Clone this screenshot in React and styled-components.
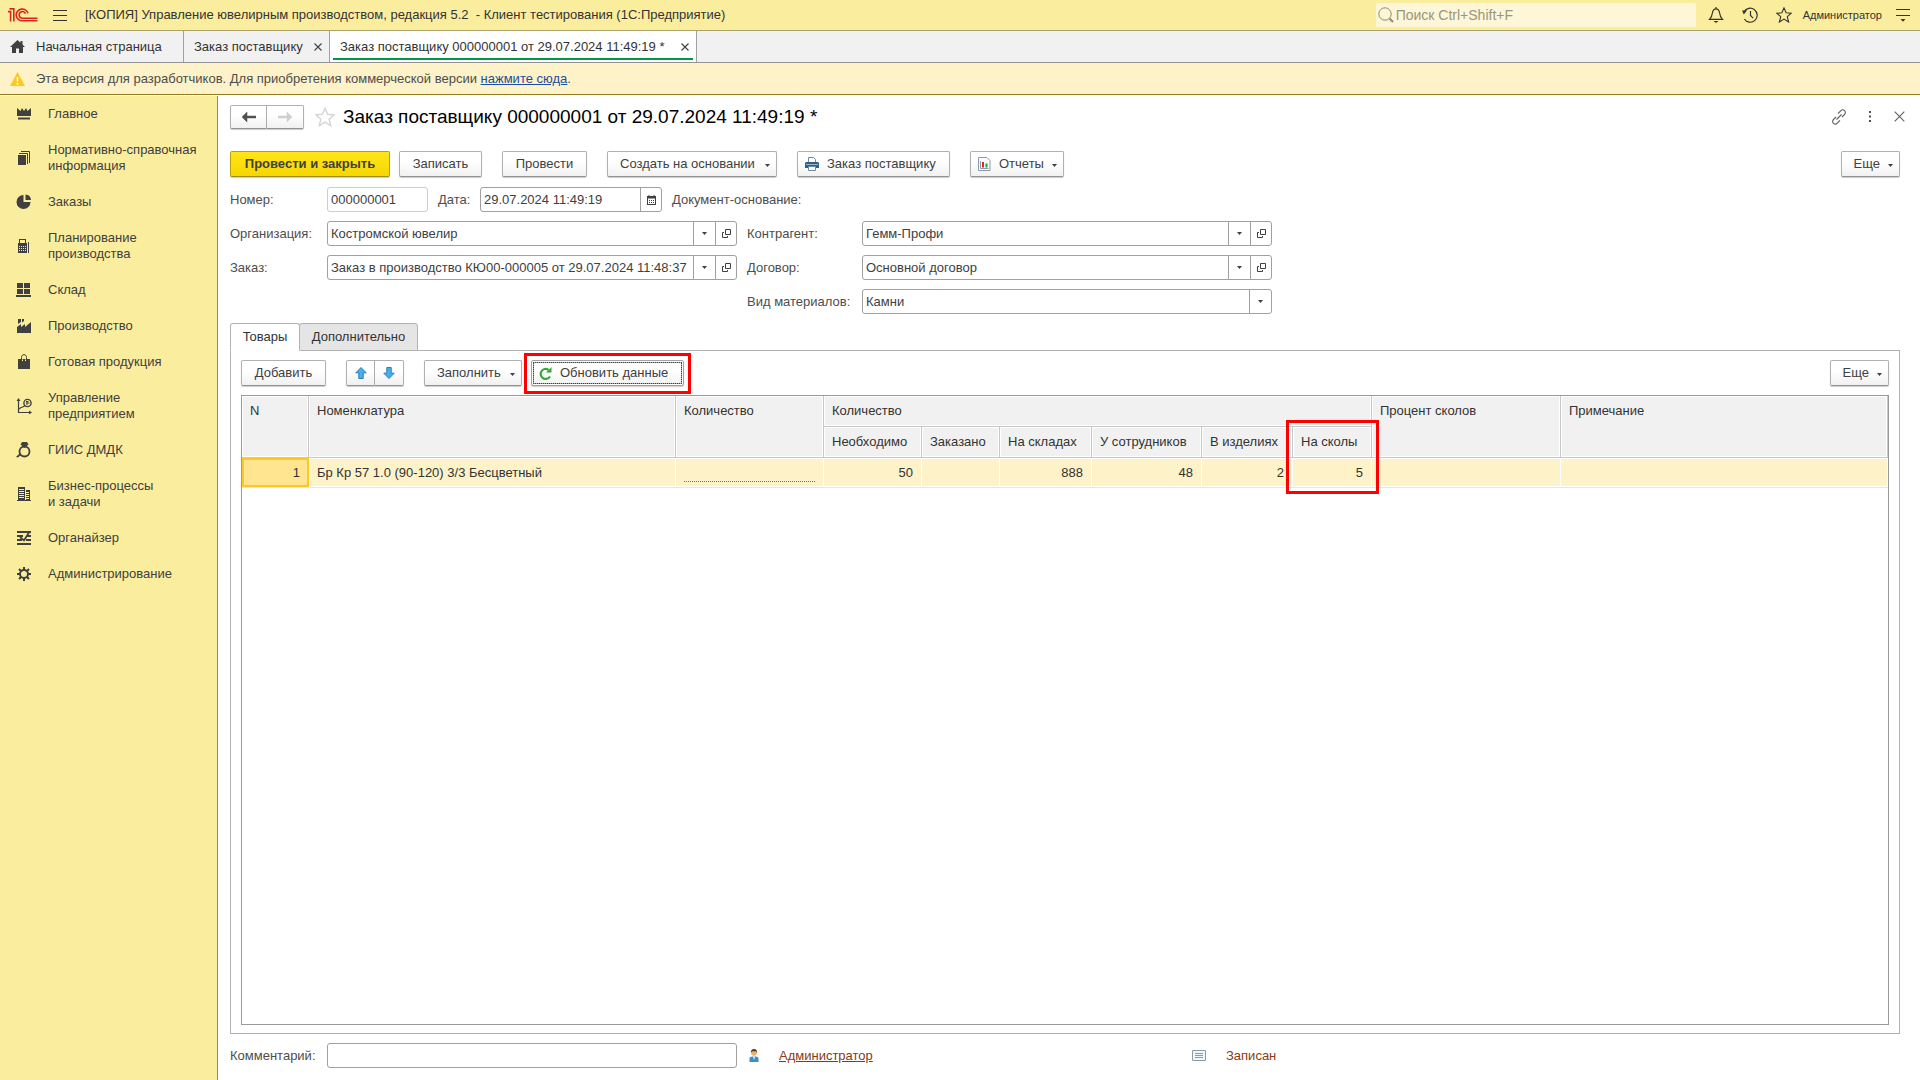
import React, { useState } from "react";
import styled, { createGlobalStyle, css } from "styled-components";

const GlobalStyle = createGlobalStyle`
  * {
    box-sizing: border-box;
  }

  body {
    margin: 0;
    background: #fff;
  }

  body, button, input, select {
    font-family: Arial, "Liberation Sans", sans-serif;
    font-size: 13px;
    line-height: 16px;
    color: #404040;
  }
`;

const Page = styled.div`
  display: flex;
  flex-direction: column;
  min-height: 100vh;
`;

/* ---------- top bar ---------- */

const TopBar = styled.header`
  display: flex;
  align-items: center;
  height: 31px;
  padding: 0 10px 0 8px;
  background: #fbed9e;
  border-bottom: 1px solid #aaa36c;
`;

const AppTitle = styled.span`
  flex: 1;
  margin-left: 18px;
  white-space: pre;
  color: #333;
`;

const IconButton = styled.button`
  display: flex;
  align-items: center;
  justify-content: center;
  padding: 0;
  border: 0;
  background: none;
  cursor: pointer;
`;

const MenuButton = styled(IconButton)`
  margin-left: 15px;
`;

const Search = styled.label`
  display: flex;
  align-items: center;
  width: 320px;
  height: 24px;
  padding-left: 2px;
  margin-right: 12px;
  border-radius: 2px;
  background: #fdf7d8;
`;

const SearchInput = styled.input`
  flex: 1;
  min-width: 0;
  padding: 0 2px;
  border: 0;
  outline: none;
  background: none;
  font-size: 14px;

  &::placeholder {
    color: #9b957c;
    opacity: 1;
  }
`;

const TopActions = styled.div`
  display: flex;
  align-items: center;
  gap: 18px;
`;

const UserName = styled.button`
  padding: 0;
  margin: 0 -4px 0 -7px;
  border: 0;
  background: none;
  font-size: 11px;
  color: #333;
`;

/* ---------- window tabs ---------- */

const WindowTabs = styled.nav`
  display: flex;
  height: 32px;
  background: #f1f1f1;
  border-bottom: 1px solid #949494;
`;

const WindowTab = styled.div`
  position: relative;
  display: flex;
  align-items: center;
  justify-content: space-between;
  gap: 9px;
  min-width: ${(props) => props.$width}px;
  padding: 0 7px 0 10px;
  border-right: 1px solid #a0a0a0;
  background: ${(props) => (props.$active ? "#fff" : "none")};

  ${(props) =>
    props.$active &&
    css`
      &::after {
        content: "";
        position: absolute;
        left: 3px;
        right: 3px;
        bottom: 2px;
        height: 2px;
        background: #009646;
      }
    `}
`;

const TabLabel = styled.button`
  display: flex;
  align-items: center;
  gap: 11px;
  padding: 0;
  border: 0;
  background: none;
  color: #333;
  white-space: nowrap;
`;

const Notice = styled.div`
  display: flex;
  align-items: center;
  gap: 11px;
  height: 32px;
  padding-left: 10px;
  background: #fdf2c8;
  border-bottom: 1px solid #937c1c;
  color: #4d4d4d;

  a {
    color: #1a4ea0;
  }
`;

/* ---------- sidebar ---------- */

const Body = styled.div`
  display: flex;
  flex: 1;
  padding-top: 1px;
`;

const Sidebar = styled.nav`
  width: 218px;
  flex-shrink: 0;
  background: #fbed9e;
  border-right: 1px solid #948c55;
`;

const SideLink = styled.a`
  display: flex;
  align-items: center;
  gap: 16px;
  padding: 10px 8px 10px 16px;
  color: #404040;
  text-decoration: none;
  white-space: pre-line;
`;

/* ---------- document form ---------- */

const Form = styled.main`
  display: flex;
  flex-direction: column;
  flex: 1;
  min-width: 0;
  padding: 8px 20px 12px 12px;
`;

const TitleRow = styled.div`
  display: flex;
  align-items: center;
  height: 25px;
`;

const Title = styled.h1`
  flex: 1;
  margin: 0 0 0 8px;
  font-size: 19px;
  line-height: 24px;
  font-weight: normal;
  color: #000;
`;

const TitleStar = styled(IconButton)`
  margin-left: 11px;
`;

const TitleActions = styled.div`
  display: flex;
  align-items: center;
  gap: 22px;
  margin-right: -5px;
`;

const Button = styled.button`
  display: flex;
  align-items: center;
  justify-content: ${(props) => (props.$icon || props.$menu ? "flex-start" : "center")};
  gap: 8px;
  min-width: ${(props) => (props.$width ? `${props.$width}px` : "auto")};
  height: 26px;
  padding: ${(props) => (props.$icon ? "0 6px 0 7px" : props.$menu ? "0 6px 0 12px" : "0 8px")};
  border: 1px solid #b0b0b0;
  border-bottom-color: #919191;
  border-radius: 2px;
  background: linear-gradient(#fff 40%, #f1f1f1);
  box-shadow: 0 1px 1px rgba(0, 0, 0, 0.2);
  white-space: nowrap;
  cursor: pointer;

  ${(props) =>
    props.$primary &&
    css`
      border-color: #b5a012;
      border-bottom-color: #a08c08;
      background: linear-gradient(#ffe619, #f7d600);
      font-weight: bold;
    `}

  ${(props) =>
    props.$focused &&
    css`
      border-color: #a0a0a0;
      box-shadow: 0 1px 1px rgba(0, 0, 0, 0.2), inset 0 0 0 1px #fff, inset 0 0 0 2px #a8a8a8;
      outline: 1px dotted #404040;
      outline-offset: -3px;
    `}
`;

const CaretSlot = styled.span`
  display: flex;
  margin: 3px 0 0 auto;
`;

const ButtonPair = styled.div`
  display: flex;

  ${Button} {
    width: ${(props) => props.$size}px;
    height: ${(props) => (props.$low ? 24 : 26)}px;
    padding: 0;
  }

  ${Button}:first-child {
    border-radius: 2px 0 0 2px;
  }

  ${Button}:last-child {
    border-left: 0;
    border-radius: 0 2px 2px 0;
  }
`;

const CommandBar = styled.div`
  display: flex;
  gap: 20px;
  margin-top: 22px;
`;

const CommandGroup = styled.div`
  display: flex;
  gap: 9px;
`;

const Spacer = styled.div`
  flex: 1;
`;

const Fields = styled.div`
  display: flex;
  flex-direction: column;
  gap: 9px;
  margin-top: 10px;
`;

const FieldRow = styled.div`
  display: flex;
  align-items: center;
  gap: 10px;
`;

const Half = styled.div`
  display: flex;
  align-items: center;
  width: ${(props) => props.$width}px;
`;

const Label = styled.label`
  width: ${(props) => (props.$width ? `${props.$width}px` : "auto")};
  flex-shrink: 0;
  white-space: nowrap;
  color: #4d4d4d;
`;

const Box = styled.div`
  position: relative;
  display: flex;
  flex: ${(props) => (props.$width ? "none" : 1)};
  width: ${(props) => (props.$width ? `${props.$width}px` : "auto")};
  min-width: 0;
  height: 25px;
  border: 1px solid ${(props) => (props.$readOnly ? "#cdcdcd" : "#a0a0a0")};
  border-radius: 3px;
  background: #fff;
`;

const control = css`
  flex: 1;
  min-width: 0;
  width: 100%;
  border: 0;
  outline: none;
  background: none;
`;

const TextInput = styled.input`
  ${control}
  padding: 0 3px;
`;

const Select = styled.select`
  ${control}
  appearance: none;
  padding: 0 24px 0 3px;
`;

const BoxButton = styled(IconButton)`
  width: 21px;
  flex-shrink: 0;
  border-left: 1px solid #a0a0a0;
`;

const SelectWrap = styled.div`
  position: relative;
  display: flex;
  flex: 1;
  min-width: 0;
`;

const SelectArrow = styled.span`
  position: absolute;
  top: 0;
  right: 0;
  bottom: 0;
  display: flex;
  align-items: center;
  justify-content: center;
  width: 22px;
  border-left: 1px solid #a0a0a0;
  pointer-events: none;
`;

/* ---------- tabs and table ---------- */

const PageTabs = styled.div`
  display: flex;
  margin-top: 9px;
`;

const PageTab = styled.button`
  height: 28px;
  min-width: ${(props) => props.$width}px;
  padding: 0 8px;
  margin-bottom: -1px;
  border: 1px solid #b3b3b3;
  border-radius: 3px 3px 0 0;
  color: #333;

  ${(props) =>
    props.$active
      ? css`
          z-index: 1;
          border-bottom-color: #fff;
          background: #fff;
        `
      : css`
          margin-left: -1px;
          background: #e5e5e5;
        `}
`;

const TabPanel = styled.section`
  display: flex;
  flex-direction: column;
  flex: 1;
  padding: 9px 10px 8px;
  border: 1px solid #b3b3b3;
`;

const TableBar = styled.div`
  display: flex;
  gap: 20px;
`;

const Marked = styled.div`
  position: relative;
`;

const Mark = styled.div`
  position: absolute;
  z-index: 2;
  inset: -7px -7px -8px;
  border: 3px solid #f00;
  pointer-events: none;
`;

const ColumnMark = styled(Mark)`
  inset: -7px -8px auto -7px;
  height: 74px;
`;

const TableBox = styled.div`
  flex: 1;
  margin-top: 9px;
  border: 1px solid #9a9a9a;
`;

const Table = styled.table`
  width: 100%;
  table-layout: fixed;
  border-collapse: separate;
  border-spacing: 0;
`;

const Th = styled.th`
  position: relative;
  height: 31px;
  padding: 7px 8px;
  border-right: 1px solid #c8c8c8;
  border-bottom: 1px solid #c8c8c8;
  background: #f1f1f1;
  box-shadow: inset 0 0 0 1px #fff;
  color: #333;
  font-weight: normal;
  text-align: left;
  vertical-align: top;
  white-space: nowrap;
`;

const Td = styled.td`
  height: 29px;
  padding: 0 8px;
  border: solid #fff;
  border-width: 1px 1px 1px 0;
  box-shadow: 0 1px 0 #e6e6e6;
  background: #fdf2c8;
  color: #333;
  text-align: ${(props) => props.$align || "left"};

  ${(props) =>
    props.$current &&
    css`
      padding: 0 7px;
      border: 2px solid #fcc821;
      background: #ffe58f;
    `}
`;

const Required = styled.div`
  height: 18px;
  border-bottom: 1px dotted #e03c28;
`;

/* ---------- footer ---------- */

const Footer = styled.footer`
  display: flex;
  align-items: center;
  margin-top: 9px;
`;

const FooterItem = styled.div`
  display: flex;
  align-items: center;
  gap: 20px;
  width: ${(props) => props.$width || 200}px;
  margin-left: 12px;
  color: #8b3a12;

  a {
    color: #8b3a12;
  }
`;

/* ---------- icons ---------- */

const CaretIcon = () => (
  <svg width="5" height="3" viewBox="0 0 5 3">
    <path d="M0 0h5L2.5 3z" fill="#404040" />
  </svg>
);

const Caret = () => (
  <CaretSlot>
    <CaretIcon />
  </CaretSlot>
);

const CloseIcon = ({ size = 8, color = "#404040" }) => (
  <svg width={size} height={size} viewBox="0 0 8 8">
    <path d="M.5.5l7 7M7.5.5l-7 7" stroke={color} strokeWidth={size > 8 ? 0.8 : 1.1} />
  </svg>
);

const OpenIcon = () => (
  <svg width="9" height="9" viewBox="0 0 9 9" fill="none" stroke="#404040">
    <path d="M3.5.5h5v5h-5z M2 3.5H.5v5h5V7" />
  </svg>
);

const CalendarIcon = () => (
  <svg width="9" height="10" viewBox="0 0 9 10">
    <path d="M0 1h9v9H0z M1.5 0h1v1h-1z M6.5 0h1v1h-1z" fill="#404040" />
    <path d="M1 3.5h7V9H1z" fill="#fff" />
    <path d="M2 5.5h5M2 7.5h5" stroke="#404040" strokeDasharray="1 1" />
  </svg>
);

const Logo = () => (
  <svg width="30" height="14" viewBox="0 0 30 14" fill="none" stroke="#d9261c" strokeWidth="1.6">
    <path d="M0 3.6h2.6V13.5" />
    <path d="M1.500 .9H5.800V13.500" />
    <path d="M20 5.400A6 5.900 0 1 0 14.500 12.800H29.500" />
    <path d="M17.500 5.600A3.300 3.300 0 1 0 14.800 10.200H29.500" />
  </svg>
);

const Hamburger = () => (
  <svg width="14" height="11" viewBox="0 0 14 11" stroke="#333">
    <path d="M0 .5h14M0 5.5h14M0 10.5h14" />
  </svg>
);

const SearchIcon = () => (
  <svg width="16" height="16" viewBox="0 0 16 16" fill="none" stroke="#8f8a70">
    <circle cx="7" cy="7" r="6.2" />
    <path d="M11.5 11.5l3.5 3.5" strokeWidth="2" />
  </svg>
);

const BellIcon = () => (
  <svg width="16" height="16" viewBox="0 0 16 16" fill="none" stroke="#333" strokeWidth="1.2">
    <path d="M1.5 12.4h13C12.500 10.500 12 9 11.600 6 11.200 3 10 1.800 8 1.800S4.800 3 4.400 6C4 9 3.500 10.500 1.500 12.400z M8 0v2" />
    <path d="M5.5 14h5L8 16z" fill="#333" stroke="none" />
  </svg>
);

const HistoryIcon = () => (
  <svg width="16" height="16" viewBox="0 0 16 16" fill="none" stroke="#333" strokeWidth="1.2">
    <path d="M2 5A7 7 0 1 1 2.300 12 M8.500 4v4.500l2.600 2.600" />
    <path d="M0 3.500h5L1.800 7.500z" fill="#333" stroke="none" />
  </svg>
);

const StarIcon = ({ size = 16, color = "#333" }) => (
  <svg width={size} height={size} viewBox="0 0 16 16" fill="none" stroke={color} strokeWidth="1.1">
    <path d="M8 .9l2.100 4.900 5.200.4-4 3.500 1.300 5.300L8 12.100 3.400 15l1.300-5.300-4-3.500 5.200-.4z" />
  </svg>
);

const SettingsIcon = () => (
  <svg width="14" height="14" viewBox="0 0 14 14">
    <path d="M0 1.5h14M0 7.5h14" stroke="#333" />
    <path d="M4.5 11h5L7 13.8z" fill="#333" />
  </svg>
);

const HomeIcon = () => (
  <svg width="15" height="13" viewBox="0 0 15 13" fill="#404040">
    <path d="M7.5 0L0 7h2v6h4V8.500h3V13h4V7h2L12.500 4.600V1h-2v1.800z" />
  </svg>
);

const WarningIcon = () => (
  <svg width="15" height="14" viewBox="0 0 15 14">
    <path d="M7.500 0L15 14H0z" fill="#fcc821" />
    <path d="M7.500 5v4.500M7.500 11v1.500" stroke="#fff" strokeWidth="1.5" />
  </svg>
);

const ArrowIcon = ({ right, color }) => (
  <svg width="14" height="10" viewBox="0 0 14 10">
    <path
      d={right ? "M14 5L9 0v4H0v2h9v4z" : "M0 5l5-5v4h9v2H5v4z"}
      fill={color}
      stroke={color}
      strokeWidth=".5"
    />
  </svg>
);

const MoveIcon = ({ down }) => (
  <svg width="12" height="12" viewBox="0 0 12 12">
    <path
      d={down ? "M6 11.500L.8 6.200h3V.5h4.400v5.700h3z" : "M6 .5l5.200 5.300h-3v5.700H3.800V5.800h-3z"}
      fill="#43b1ee"
      stroke="#2b7fb5"
    />
  </svg>
);

const LinkIcon = () => (
  <svg width="16" height="16" viewBox="0 0 16 16" fill="none" stroke="#606060" strokeWidth="1.1">
    <path d="M7 4.500l2.700-2.700c1.200-1.200 2.700-1.200 3.800-.2s1.200 2.700 0 3.900L11 8M9 11.500l-2.700 2.700c-1.200 1.200-2.700 1.200-3.800.2s-1.200-2.700 0-3.900L5 8M5.500 10.500l5-5" />
  </svg>
);

const DotsIcon = () => (
  <svg width="3" height="11" viewBox="0 0 3 11" fill="#505050">
    <path d="M0 0h2v2H0zM0 4.500h2v2H0zM0 9h2v2H0z" />
  </svg>
);

const PrinterIcon = () => (
  <svg width="14" height="14" viewBox="0 0 14 14">
    <path d="M3.500 6V.5h5l2 2V6" fill="#fff" stroke="#6d8aa5" />
    <path d="M1 5h12l1 1v5H0V6z" fill="#2f5f8a" />
    <path d="M1 7.500h12" stroke="#9db9d1" />
    <path d="M3.500 9.500h7v4h-7z" fill="#fff" stroke="#6d8aa5" />
  </svg>
);

const ReportIcon = () => (
  <svg width="13" height="14" viewBox="0 0 13 14">
    <path d="M.5.5h8.500l3 3v10H.5z" fill="#f7fafc" stroke="#8b9bac" />
    <path d="M2.500 4v7.500h8" fill="none" stroke="#8b9bac" />
    <path d="M4 5h2v5.500H4z" fill="#e02a1f" />
    <path d="M7.500 6.500h2v4h-2z" fill="#2f9e3a" />
  </svg>
);

const RefreshIcon = () => (
  <svg width="13" height="13" viewBox="0 0 13 13">
    <path d="M11 9.500A5 5 0 1 1 9.500 2.800" fill="none" stroke="#35a83a" strokeWidth="2.2" />
    <path d="M12.500 0v5.500H7z" fill="#35a83a" />
  </svg>
);

const PersonIcon = () => (
  <svg width="10" height="13" viewBox="0 0 10 13">
    <path d="M.5 13V9.500C.5 8 2 7.500 5 7.500s4.500.5 4.500 2V13z" fill="#3a8fc7" />
    <path d="M4 7.500h2L5 11z" fill="#fff" />
    <circle cx="5" cy="3.800" r="2.900" fill="#e9b26b" />
    <path d="M1.800 4C1.800 1 3 0 5 0s3.200 1 3.200 4L7 2.200H3z" fill="#4b3a2c" />
  </svg>
);

const NoteIcon = () => (
  <svg width="14" height="11" viewBox="0 0 14 11">
    <path d="M.5.5h13v10H.5z" fill="#f4f7fa" stroke="#8b9bac" />
    <path d="M3 3.500h8M3 5.500h8M3 7.500h8" stroke="#8b9bac" />
  </svg>
);

const SIDE_ICONS = {
  crown: <path d="M1 2l3.500 3L6 2l2 3 2-3 1.500 3L15 2v8H1zM2 11.500h12V13.500H2z" />,
  books: (
    <>
      <path d="M2 5h8v10H2z" />
      <path d="M3 3.500h8.500V14M5 1.500h8.500V13" fill="none" stroke="#404040" />
    </>
  ),
  pie: <path d="M7.500 1v7h7a7 7 0 1 1-7-7zM9.500 .5A6 6 0 0 1 15 6H9.500z" />,
  register: (
    <>
      <path d="M3 1h7v4h1v10H2V5h1zM4 2v3h5V2z" fillRule="evenodd" />
      <path d="M3 8.500h7M3 10.500h7M3 12.500h7" stroke="#fbed9e" strokeDasharray="1 1" />
      <path d="M12.500 4v11" stroke="#404040" />
    </>
  ),
  boxes: <path d="M1 1h6v5H1zM8 1h6v5H8zM1 7h6v5H1zM8 7h6v5H8zM0 13h15v2H0z" />,
  factory: <path d="M1 15V9l4-3v3l4-3v3l6-5v11zM2 1h3v3L2 6zM6 1h2v2L6 4.500z" />,
  bag: (
    <>
      <path d="M2 5h12v10H2z" />
      <path d="M5.500 8V3.500C5.500 1.500 6.500 .7 8 .7s2.500.8 2.500 2.800V8" fill="none" stroke="#404040" />
      <path d="M6.500 5.500V7M9.500 5.500V7" stroke="#fbed9e" />
    </>
  ),
  growth: (
    <>
      <path d="M2.500 2v12.500H14M3 11c3-3 5-1 6-4" fill="none" stroke="#404040" strokeWidth="1.2" />
      <path d="M2.500 0l2 3h-4zM16 14.500l-3-2v4z" />
      <circle cx="11.500" cy="5" r="3.600" fill="none" stroke="#404040" strokeWidth="1.4" />
      <path d="M10 5h3.500M11 3v4M10 3.500h2.500" stroke="#404040" />
    </>
  ),
  ring: (
    <>
      <circle cx="8.500" cy="9.500" r="5" fill="none" stroke="#404040" strokeWidth="1.8" />
      <path d="M6 0h5l1.500 2.500L8.500 6l-4-3.500zM0 15l4-4 1.500 1.500L2 15.500z" />
    </>
  ),
  buildings: (
    <>
      <path d="M2 1h7v13H2zM10 4h4v10h-4zM1 14h14v1H1z" />
      <path
        d="M3 3.500h5M3 5.500h5M3 7.500h5M3 9.500h5M3 11.500h5M10 6.500h3M10 8.500h3M10 10.500h3M10 12.500h3"
        stroke="#fbed9e"
      />
    </>
  ),
  organizer: (
    <path
      d="M1 2h14M1 6h6M11 6h4M1 10h5M10 10h5M1 14h14M4 7l4 3.500L13 2.500"
      fill="none"
      stroke="#404040"
      strokeWidth="1.8"
    />
  ),
  gear: (
    <g fill="none" stroke="#404040" strokeWidth="2">
      <circle cx="8" cy="8" r="4" />
      <path d="M8 1v3M8 12v3M1 8h3M12 8h3M3 3l2 2M11 11l2 2M13 3l-2 2M5 11l-2 2" />
    </g>
  ),
};

const SideSvg = styled.svg`
  flex-shrink: 0;
`;

const SideIcon = ({ name }) => (
  <SideSvg width="16" height="16" viewBox="0 0 16 16" fill="#404040">
    {SIDE_ICONS[name]}
  </SideSvg>
);

const SECTIONS = [
  { icon: "crown", label: "Главное" },
  { icon: "books", label: "Нормативно-справочная\nинформация" },
  { icon: "pie", label: "Заказы" },
  { icon: "register", label: "Планирование\nпроизводства" },
  { icon: "boxes", label: "Склад" },
  { icon: "factory", label: "Производство" },
  { icon: "bag", label: "Готовая продукция" },
  { icon: "growth", label: "Управление\nпредприятием" },
  { icon: "ring", label: "ГИИС ДМДК" },
  { icon: "buildings", label: "Бизнес-процессы\nи задачи" },
  { icon: "organizer", label: "Органайзер" },
  { icon: "gear", label: "Администрирование" },
];

const COLUMN_WIDTHS = [67, 367, 148, 98, 78, 92, 110, 91, 79, 189];

function ChoiceField({ id, value, openable }) {
  return (
    <Box>
      <SelectWrap>
        <Select id={id} defaultValue={value}>
          <option>{value}</option>
        </Select>
        <SelectArrow>
          <CaretIcon />
        </SelectArrow>
      </SelectWrap>
      {openable && (
        <BoxButton type="button" aria-label="Открыть">
          <OpenIcon />
        </BoxButton>
      )}
    </Box>
  );
}

function Header() {
  return (
    <TopBar>
      <Logo />
      <MenuButton aria-label="Меню">
        <Hamburger />
      </MenuButton>
      <AppTitle>
        {"[КОПИЯ] Управление ювелирным производством, редакция 5.2  - Клиент тестирования (1С:Предприятие)"}
      </AppTitle>
      <Search>
        <SearchIcon />
        <SearchInput type="text" placeholder="Поиск Ctrl+Shift+F" aria-label="Поиск" />
      </Search>
      <TopActions>
        <IconButton aria-label="Уведомления">
          <BellIcon />
        </IconButton>
        <IconButton aria-label="История">
          <HistoryIcon />
        </IconButton>
        <IconButton aria-label="Избранное">
          <StarIcon />
        </IconButton>
        <UserName>Администратор</UserName>
        <IconButton aria-label="Настройки">
          <SettingsIcon />
        </IconButton>
      </TopActions>
    </TopBar>
  );
}

function OpenWindows() {
  return (
    <WindowTabs>
      <WindowTab $width={184}>
        <TabLabel>
          <HomeIcon />
          Начальная страница
        </TabLabel>
      </WindowTab>
      <WindowTab $width={146}>
        <TabLabel>Заказ поставщику</TabLabel>
        <IconButton aria-label="Закрыть">
          <CloseIcon />
        </IconButton>
      </WindowTab>
      <WindowTab $width={367} $active>
        <TabLabel>Заказ поставщику 000000001 от 29.07.2024 11:49:19 *</TabLabel>
        <IconButton aria-label="Закрыть">
          <CloseIcon />
        </IconButton>
      </WindowTab>
    </WindowTabs>
  );
}

function GoodsTable() {
  return (
    <TableBox>
      <Table>
        <colgroup>
          {COLUMN_WIDTHS.map((width, index) => (
            <col key={index} width={width} />
          ))}
          <col />
        </colgroup>
        <thead>
          <tr>
            <Th rowSpan={2}>N</Th>
            <Th rowSpan={2}>Номенклатура</Th>
            <Th rowSpan={2}>Количество</Th>
            <Th colSpan={6}>Количество</Th>
            <Th rowSpan={2}>Процент сколов</Th>
            <Th rowSpan={2}>Примечание</Th>
          </tr>
          <tr>
            <Th>Необходимо</Th>
            <Th>Заказано</Th>
            <Th>На складах</Th>
            <Th>У сотрудников</Th>
            <Th>В изделиях</Th>
            <Th>
              На сколы
              <ColumnMark />
            </Th>
          </tr>
        </thead>
        <tbody>
          <tr>
            <Td $align="right" $current>1</Td>
            <Td>Бр Кр 57 1.0 (90-120) 3/3 Бесцветный</Td>
            <Td>
              <Required />
            </Td>
            <Td $align="right">50</Td>
            <Td />
            <Td $align="right">888</Td>
            <Td $align="right">48</Td>
            <Td $align="right">2</Td>
            <Td $align="right">5</Td>
            <Td />
            <Td />
          </tr>
        </tbody>
      </Table>
    </TableBox>
  );
}

export default function App() {
  const [tab, setTab] = useState("goods");

  return (
    <Page>
      <GlobalStyle />
      <Header />
      <OpenWindows />
      <Notice>
        <WarningIcon />
        <span>
          Эта версия для разработчиков. Для приобретения коммерческой версии <a href="#buy">нажмите сюда</a>.
        </span>
      </Notice>
      <Body>
        <Sidebar>
          {SECTIONS.map(({ icon, label }) => (
            <SideLink key={icon} href={`#${icon}`}>
              <SideIcon name={icon} />
              {label}
            </SideLink>
          ))}
        </Sidebar>
        <Form>
          <TitleRow>
            <ButtonPair $size={37} $low>
              <Button aria-label="Назад">
                <ArrowIcon color="#505050" />
              </Button>
              <Button aria-label="Вперед">
                <ArrowIcon right color="#cfcfcf" />
              </Button>
            </ButtonPair>
            <TitleStar aria-label="В избранное">
              <StarIcon size={20} color="#d5d5d5" />
            </TitleStar>
            <Title>Заказ поставщику 000000001 от 29.07.2024 11:49:19 *</Title>
            <TitleActions>
              <IconButton aria-label="Получить ссылку">
                <LinkIcon />
              </IconButton>
              <IconButton aria-label="Еще действия">
                <DotsIcon />
              </IconButton>
              <IconButton aria-label="Закрыть">
                <CloseIcon size={11} color="#606060" />
              </IconButton>
            </TitleActions>
          </TitleRow>

          <CommandBar>
            <CommandGroup>
              <Button $primary $width={160}>Провести и закрыть</Button>
              <Button $width={83}>Записать</Button>
            </CommandGroup>
            <Button $width={85}>Провести</Button>
            <Button $menu $width={170}>
              Создать на основании
              <Caret />
            </Button>
            <Button $icon $width={153}>
              <PrinterIcon />
              Заказ поставщику
            </Button>
            <Button $icon $width={94}>
              <ReportIcon />
              Отчеты
              <Caret />
            </Button>
            <Spacer />
            <Button $menu $width={59}>
              Еще
              <Caret />
            </Button>
          </CommandBar>

          <Fields>
            <FieldRow>
              <Half $width={198}>
                <Label htmlFor="number" $width={97}>Номер:</Label>
                <Box $readOnly>
                  <TextInput id="number" type="text" defaultValue="000000001" readOnly />
                </Box>
              </Half>
              <Half $width={224}>
                <Label htmlFor="date" $width={42}>Дата:</Label>
                <Box>
                  <TextInput id="date" type="text" defaultValue="29.07.2024 11:49:19" />
                  <BoxButton type="button" aria-label="Выбрать дату">
                    <CalendarIcon />
                  </BoxButton>
                </Box>
              </Half>
              <Label as="span">Документ-основание:</Label>
            </FieldRow>
            <FieldRow>
              <Half $width={507}>
                <Label htmlFor="company" $width={97}>Организация:</Label>
                <ChoiceField id="company" value="Костромской ювелир" openable />
              </Half>
              <Half $width={525}>
                <Label htmlFor="partner" $width={115}>Контрагент:</Label>
                <ChoiceField id="partner" value="Гемм-Профи" openable />
              </Half>
            </FieldRow>
            <FieldRow>
              <Half $width={507}>
                <Label htmlFor="order" $width={97}>Заказ:</Label>
                <ChoiceField
                  id="order"
                  value="Заказ в производство КЮ00-000005 от 29.07.2024 11:48:37"
                  openable
                />
              </Half>
              <Half $width={525}>
                <Label htmlFor="contract" $width={115}>Договор:</Label>
                <ChoiceField id="contract" value="Основной договор" openable />
              </Half>
            </FieldRow>
            <FieldRow>
              <Half $width={507} />
              <Half $width={525}>
                <Label htmlFor="material" $width={115}>Вид материалов:</Label>
                <ChoiceField id="material" value="Камни" />
              </Half>
            </FieldRow>
          </Fields>

          <PageTabs role="tablist">
            <PageTab role="tab" $width={70} $active={tab === "goods"} onClick={() => setTab("goods")}>
              Товары
            </PageTab>
            <PageTab role="tab" $width={119} $active={tab === "extra"} onClick={() => setTab("extra")}>
              Дополнительно
            </PageTab>
          </PageTabs>
          <TabPanel>
            <TableBar>
              <Button $width={85}>Добавить</Button>
              <ButtonPair $size={29}>
                <Button aria-label="Вверх">
                  <MoveIcon />
                </Button>
                <Button aria-label="Вниз">
                  <MoveIcon down />
                </Button>
              </ButtonPair>
              <CommandGroup>
                <Button $menu $width={98}>
                  Заполнить
                  <Caret />
                </Button>
                <Marked>
                  <Button $icon $focused $width={153}>
                    <RefreshIcon />
                    Обновить данные
                  </Button>
                  <Mark />
                </Marked>
              </CommandGroup>
              <Spacer />
              <Button $menu $width={59}>
                Еще
                <Caret />
              </Button>
            </TableBar>
            <GoodsTable />
          </TabPanel>

          <Footer>
            <Label htmlFor="comment" $width={97}>Комментарий:</Label>
            <Box $width={410}>
              <TextInput id="comment" type="text" />
            </Box>
            <FooterItem $width={431}>
              <PersonIcon />
              <a href="#user">Администратор</a>
            </FooterItem>
            <FooterItem>
              <NoteIcon />
              Записан
            </FooterItem>
          </Footer>
        </Form>
      </Body>
    </Page>
  );
}
